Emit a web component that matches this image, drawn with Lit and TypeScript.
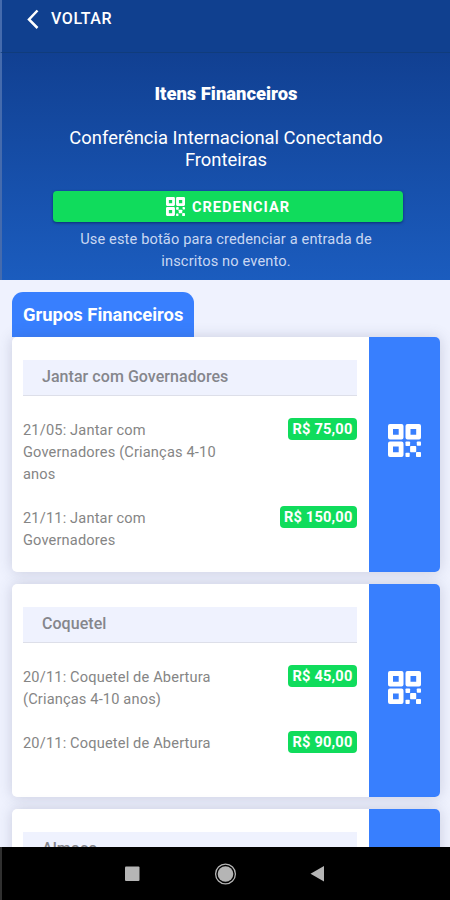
import { LitElement, html, css } from "lit";
import { customElement, property } from "lit/decorators.js";

interface Entry {
  label: string;
  price: string;
}
interface Group {
  title: string;
  entries: Entry[];
}

const GROUPS: Group[] = [
  {
    title: "Jantar com Governadores",
    entries: [
      { label: "21/05: Jantar com Governadores (Crianças 4-10 anos", price: "R$ 75,00" },
      { label: "21/11: Jantar com Governadores", price: "R$ 150,00" },
    ],
  },
  {
    title: "Coquetel",
    entries: [
      { label: "20/11: Coquetel de Abertura (Crianças 4-10 anos)", price: "R$ 45,00" },
      { label: "20/11: Coquetel de Abertura", price: "R$ 90,00" },
    ],
  },
  { title: "Almoço", entries: [] },
];

@customElement("qr-icon")
export class QrIcon extends LitElement {
  static styles = css`
    :host { display: block; }
    svg { display: block; width: 100%; height: 100%; }
  `;
  render() {
    return html`<svg viewBox="0 0 33 33" fill="#fff" fill-rule="evenodd">
      <path d="M2 0H13.5a2 2 0 0 1 2 2V13.5a2 2 0 0 1-2 2H2a2 2 0 0 1-2-2V2a2 2 0 0 1 2-2ZM5 5V10.7H10.7V5Z" />
      <path d="M19.5 0H31a2 2 0 0 1 2 2V13.5a2 2 0 0 1-2 2H19.5a2 2 0 0 1-2-2V2a2 2 0 0 1 2-2ZM22.5 5V10.7H28.2V5Z" />
      <path d="M2 17.5H13.5a2 2 0 0 1 2 2V31a2 2 0 0 1-2 2H2a2 2 0 0 1-2-2V19.5a2 2 0 0 1 2-2ZM5 22.5V28.2H10.7V22.5Z" />
      <rect x="17.5" y="17.5" width="4.6" height="4.6" rx=".8" />
      <rect x="28.8" y="17.5" width="4.2" height="4.2" rx=".8" />
      <rect x="22.1" y="22.1" width="6.1" height="6.1" rx=".8" />
      <rect x="17.5" y="28.8" width="4.2" height="4.2" rx=".8" />
      <rect x="28" y="28" width="5" height="5" rx=".8" />
    </svg>`;
  }
}

@customElement("group-card")
export class GroupCard extends LitElement {
  @property({ attribute: false }) group!: Group;

  static styles = css`
    :host {
      display: flex;
      background: #fff;
      border-radius: 5px;
      box-shadow: 0 0 14px rgba(70, 75, 110, 0.22);
    }
    .main { flex: 1; padding: 23px 12px 0 11px; }
    .title {
      height: 35px;
      line-height: 34px;
      box-sizing: content-box;
      border-bottom: 1px solid #dddfe9;
      background: #eff2fe;
      padding-left: 19px;
      font-size: 16px;
      font-weight: 500;
      letter-spacing: 0.05px;
      color: #85868c;
      margin-bottom: 23px;
    }
    .entry { display: flex; justify-content: space-between; align-items: flex-start; margin-bottom: 22px; }
    .label { width: 200px; font-size: 14.6px; line-height: 22px; letter-spacing: 0.16px; color: #858585; }
    .price {
      height: 22px;
      line-height: 22px;
      margin-top: -0.5px;
      padding: 0 4px;
      border-radius: 4px;
      background: #10dc5c;
      color: #fff;
      font-size: 14.6px;
      font-weight: 700;
      letter-spacing: 0.2px;
      white-space: nowrap;
    }
    .side {
      width: 71.5px;
      background: #387ffe;
      border-radius: 0 5px 5px 0;
      display: flex;
      align-items: center;
      justify-content: center;
    }
    .side qr-icon { width: 33px; height: 33px; margin-top: -28px; }
    :host(.mid) .side qr-icon { margin-top: -5px; }
  `;

  render() {
    return html`
      <div class="main">
        <div class="title">${this.group.title}</div>
        ${this.group.entries.map(
          (e) => html`<div class="entry">
            <div class="label">${e.label}</div>
            <div class="price">${e.price}</div>
          </div>`
        )}
      </div>
      <div class="side"><qr-icon></qr-icon></div>
    `;
  }
}

@customElement("app-root")
export class AppRoot extends LitElement {
  static styles = css`
    :host {
      display: flex;
      flex-direction: column;
      width: 450px;
      height: 900px;
      overflow: hidden;
      background: #eff2fe;
      font-family: Roboto, sans-serif;
      color: #fff;
    }
    .bar {
      flex: none;
      height: 53px;
      box-sizing: border-box;
      display: flex;
      align-items: flex-start;
      padding: 9px 0 0 25px;
      background: #10408f;
      border-left: 2px solid #456bad;
      border-bottom: 1px solid #103c7c;
    }
    .bar svg { width: 13px; height: 20px; margin-right: 11px; }
    .back { font-size: 16px; line-height: 20px; font-weight: 500; letter-spacing: 0.6px; }
    .hero {
      flex: none;
      height: 227px;
      box-sizing: border-box;
      border-left: 2px solid #456bad;
      background: linear-gradient(#114092, #1b5cbe);
      display: flex;
      flex-direction: column;
      align-items: center;
      text-align: center;
    }
    .heading { margin-top: 30px; font-size: 18.4px; line-height: 22px; font-weight: 900; }
    .event { margin-top: 22px; width: 340px; font-size: 18.4px; line-height: 22px; }
    .cta {
      margin: 20px 0 0 4px;
      width: 350px;
      height: 31px;
      border-radius: 4px;
      background: #10dc5c;
      box-shadow: 0 1px 3px rgba(0, 20, 70, 0.6);
      display: flex;
      align-items: center;
      justify-content: center;
      gap: 7px;
      font-size: 14.6px;
      font-weight: 700;
      letter-spacing: 1px;
    }
    .cta qr-icon { width: 19px; height: 19px; }
    .hint { margin-top: 7px; width: 310px; font-size: 14.6px; line-height: 21.5px; letter-spacing: 0.14px; color: #c9d7f2; }
    .list { flex: 1; min-height: 0; overflow: hidden; padding: 12px 10px 0 12px; }
    .tab {
      width: 182px;
      height: 44.5px;
      box-sizing: border-box;
      padding-left: 11px;
      line-height: 45px;
      border-radius: 11px 11px 0 0;
      background: #387ffe;
      font-size: 18.4px;
      font-weight: 700;
    }
    .cards { display: flex; flex-direction: column; gap: 12px; }
    .first { height: 235px; }
    .mid { height: 213px; }
    .last { height: 200px; }
    .nav { flex: none; height: 53px; background: #000; border-left: 2px solid #303030; box-sizing: border-box; }
    .nav svg { display: block; }
  `;

  render() {
    const sizes = ["first", "mid", "last"];
    return html`
      <div class="bar">
        <svg viewBox="0 0 13 20" fill="none" stroke="#fff" stroke-width="2.5"><path d="M10.5 1.5 2 10.5 10.5 19" /></svg>
        <div class="back">VOLTAR</div>
      </div>
      <div class="hero">
        <div class="heading">Itens Financeiros</div>
        <div class="event">Conferência Internacional Conectando Fronteiras</div>
        <div class="cta"><qr-icon></qr-icon><span>CREDENCIAR</span></div>
        <div class="hint">Use este botão para credenciar a entrada de inscritos no evento.</div>
      </div>
      <div class="list">
        <div class="tab">Grupos Financeiros</div>
        <div class="cards">
          ${GROUPS.map((g, i) => html`<group-card class=${sizes[i]} .group=${g}></group-card>`)}
        </div>
      </div>
      <div class="nav">
        <svg width="448" height="53" viewBox="2 847 448 53" fill="#b5b5b5">
          <rect x="125" y="866.5" width="14.5" height="14.5" rx="1" />
          <circle cx="225.5" cy="874" r="7.8" />
          <circle cx="225.5" cy="874" r="9.9" fill="none" stroke="#b5b5b5" stroke-width="1.3" />
          <path d="M310.5 873.7 324 866V881.5Z" />
        </svg>
      </div>
    `;
  }
}
